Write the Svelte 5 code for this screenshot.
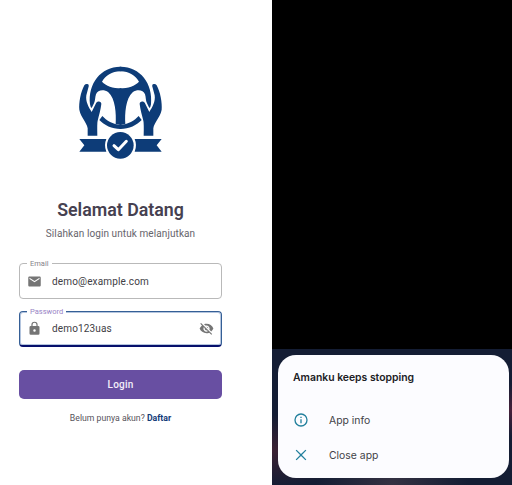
<script>
  let email = 'demo@example.com';
  let password = 'demo123uas';
</script>

<main class="screens">
  <section class="login">
    <svg class="logo" viewBox="-18 -12 300 315" aria-hidden="true">
      <defs>
        <g id="half">
          <path d="M42 121C35 58 75 8 133 8H136V22H133C108 22 88 36 78 53C90 66 110 73 136 73V183L119 180C121 150 118 103 97 85C83 75 65 78 60 91C57 100 58 111 54 118L47 132Q43 129 42 121Z" />
          <path d="M79 156C91 169 111 182 134 182H136V195H134C108 195 84 183 70 168Z" />
          <path d="M32 60C38 59 40 64 37 71L31 94C28 112 38 130 47 144L60 118C63 110 77 111 76 120C74 137 69 154 65 170Q63 177 64 215H35V193C32 174 14 160 10 137C8 117 14 84 25 64Q28 60 32 60Z" />
          <path d="M10 225H91Q83 244 91 263H10L25 244Z" />
        </g>
      </defs>
      <g fill="#0d3c78">
        <use href="#half" />
        <use href="#half" transform="translate(267 0) scale(-1 1)" />
        <circle cx="133" cy="244" r="40" />
      </g>
      <path d="M114 245L127 257L151 232" fill="none" stroke="#fff" stroke-width="9" stroke-linecap="round" stroke-linejoin="round" />
    </svg>

    <h1>Selamat Datang</h1>
    <p class="subtitle">Silahkan login untuk melanjutkan</p>

    <div class="field">
      <span class="label">Email</span>
      <svg class="icon" viewBox="0 0 24 24"><path d="M20 4H4c-1.100 0-2 .9-2 2v12c0 1.100.9 2 2 2h16c1.100 0 2-.9 2-2V6c0-1.100-.9-2-2-2zm0 4-8 5-8-5V6l8 5 8-5v2z" /></svg>
      <span class="value">{email}</span>
    </div>

    <div class="field focused">
      <span class="label">Password</span>
      <svg class="icon" viewBox="0 0 24 24"><path d="M18 8h-1V6A5 5 0 0 0 7 6v2H6a2 2 0 0 0-2 2v10a2 2 0 0 0 2 2h12a2 2 0 0 0 2-2V10a2 2 0 0 0-2-2zm-6 9a2 2 0 1 1 0-4 2 2 0 0 1 0 4zm3.100-9H8.900V6a3.100 3.100 0 0 1 6.200 0v2z" /></svg>
      <span class="value">{password}</span>
      <svg class="icon eye" viewBox="0 0 24 24"><path d="M12 7c2.760 0 5 2.240 5 5 0 .65-.13 1.260-.36 1.830l2.920 2.920A11.800 11.800 0 0 0 23 12c-1.730-4.390-6-7.500-11-7.500-1.400 0-2.740.25-3.980.7l2.160 2.160C10.740 7.130 11.350 7 12 7zM2 4.270l2.740 2.740A11.800 11.800 0 0 0 1 12c1.730 4.390 6 7.500 11 7.500 1.550 0 3.030-.3 4.380-.84L19.730 22 21 20.730 3.270 3 2 4.270zM7.530 9.800l1.550 1.550A3 3 0 0 0 12.650 14.920l1.550 1.550A5 5 0 0 1 7.530 9.800zm4.310-.78 3.150 3.150.02-.16a3 3 0 0 0-3-3l-.17.01z" /></svg>
    </div>

    <button>Login</button>
    <p class="register">Belum punya akun? <b>Daftar</b></p>
  </section>

  <section class="phone">
    <div class="backdrop">
      <div class="dialog">
        <h2>Amanku keeps stopping</h2>
        <div class="action">
          <svg viewBox="0 0 24 24"><path d="M11 7h2v2h-2zm0 4h2v6h-2zm1-9a10 10 0 1 0 0 20 10 10 0 0 0 0-20zm0 18a8 8 0 1 1 0-16 8 8 0 0 1 0 16z" /></svg>
          <span>App info</span>
        </div>
        <div class="action">
          <svg viewBox="0 0 24 24"><path d="M20 5.400 18.600 4 12 10.600 5.400 4 4 5.400l6.600 6.600L4 18.600 5.400 20l6.600-6.600 6.600 6.600 1.400-1.400-6.600-6.600z" /></svg>
          <span>Close app</span>
        </div>
      </div>
    </div>
  </section>
</main>

<style>
  :global(body) { background: #fff; }
  .screens { display: flex; width: 512px; height: 485px; overflow: hidden; font-family: Roboto, sans-serif; }
  .login { width: 241px; height: 485px; box-sizing: border-box; padding-top: 60px; margin-right: 31px; display: flex; flex-direction: column; align-items: center; }
  .logo { width: 100px; height: 105px; margin-right: 1px; flex-shrink: 0; }
  h1 { margin: 34px 0 0; font-size: 17.800px; line-height: 22px; font-weight: 600; color: #464150; white-space: nowrap; }
  .subtitle { margin: 6px 0 0; font-size: 10px; line-height: 14px; letter-spacing: .09px; color: #66646b; }
  .field { position: relative; display: flex; align-items: center; width: 203px; height: 36px; margin-top: 22px; padding: 0 7px; box-sizing: border-box; border: 1px solid #b9b9b9; border-radius: 4px; }
  .label { position: absolute; top: -5px; left: 7px; padding: 0 3px; background: #fff; font-size: 7.500px; line-height: 10px; color: #85828a; }
  .field .value { padding-top: 1px; }
  .field.focused { margin-top: 12px; height: 36px; border: 1px solid #355f96; border-bottom: 2px solid #07106c; box-shadow: inset 0 0 0 1px #b4c5de; }
  .focused .label { color: #9783c5; }
  .icon { width: 15px; height: 15px; fill: #757575; }
  .value { margin-left: 10px; font-size: 10px; line-height: 14px; letter-spacing: .15px; color: #414045; }
  .eye { margin-left: auto; }
  button { width: 203px; height: 29px; margin-top: 23px; padding: 0; border: 0; border-radius: 5px; background: #684fa2; color: #f4effa; font: 500 10px/14px Roboto, sans-serif; letter-spacing: .2px; }
  .register { margin: 13px 0 0; font-size: 8.700px; line-height: 12px; color: #57535b; white-space: nowrap; }
  .register b { color: #123a78; }
  .phone { display: flex; flex-direction: column; justify-content: flex-end; width: 240px; background: #000; }
  .backdrop { box-sizing: border-box; height: 136px; padding: 6px 3px 7px 6px; background: radial-gradient(ellipse at 0 75%, #3b2133, transparent 25%), radial-gradient(ellipse at 100% 45%, #45203a, transparent 25%), radial-gradient(ellipse at 50% 100%, #343142, transparent 45%), #141d34; }
  .dialog { height: 123px; box-sizing: border-box; padding: 16px 15px; border-radius: 18px; background: #fcfcff; font-family: Inter, sans-serif; }
  h2 { margin: 0 0 26px; font-size: 10.400px; line-height: 14px; font-weight: 600; color: #202024; }
  .action { display: flex; align-items: center; height: 18px; margin-bottom: 17px; font-size: 10.400px; color: #424247; }
  .action svg { width: 16px; height: 16px; margin-right: 20px; fill: #23809d; }
</style>
